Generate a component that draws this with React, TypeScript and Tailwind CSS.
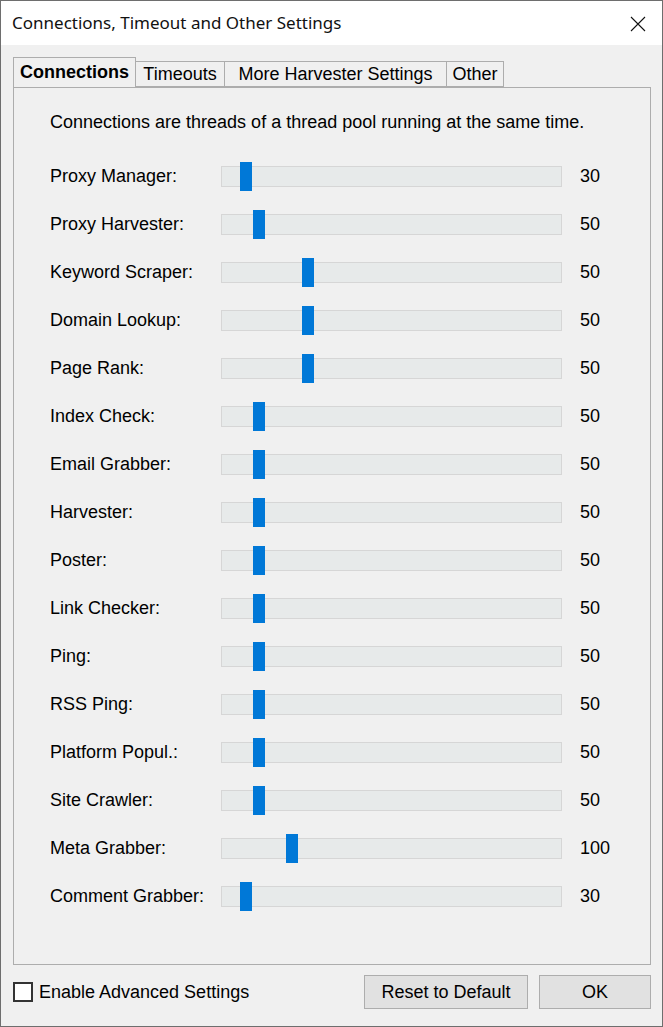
import { memo } from "react";

interface ISliderRow {
  label: string;
  value: number;
  thumb: number; // px offset of the thumb from the track's left edge
}

const rows: ISliderRow[] = [
  { label: "Proxy Manager:", value: 30, thumb: 18 },
  { label: "Proxy Harvester:", value: 50, thumb: 31 },
  { label: "Keyword Scraper:", value: 50, thumb: 80 },
  { label: "Domain Lookup:", value: 50, thumb: 80 },
  { label: "Page Rank:", value: 50, thumb: 80 },
  { label: "Index Check:", value: 50, thumb: 31 },
  { label: "Email Grabber:", value: 50, thumb: 31 },
  { label: "Harvester:", value: 50, thumb: 31 },
  { label: "Poster:", value: 50, thumb: 31 },
  { label: "Link Checker:", value: 50, thumb: 31 },
  { label: "Ping:", value: 50, thumb: 31 },
  { label: "RSS Ping:", value: 50, thumb: 31 },
  { label: "Platform Popul.:", value: 50, thumb: 31 },
  { label: "Site Crawler:", value: 50, thumb: 31 },
  { label: "Meta Grabber:", value: 100, thumb: 64 },
  { label: "Comment Grabber:", value: 30, thumb: 18 },
];

const SliderRow: React.FC<ISliderRow> = ({ label, value, thumb }) => {
  return (
    <div className="flex items-center h-[48px]">
      <span className="w-[171px] shrink-0">{label}</span>
      <div className="relative w-[341px] h-[21px] shrink-0 border border-[#d6d6d6] bg-[#e7eaea]">
        <div
          className="absolute top-[-5px] w-[12px] h-[29px] bg-[#0078d7]"
          style={{ left: thumb }}
        />
      </div>
      <span className="ml-[18px]">{value}</span>
    </div>
  );
};

const App = () => {
  return (
    <div
      className="w-[663px] h-[1027px] flex flex-col border border-[#6e6e6e] bg-[#f0f0f0] text-black text-[18px]"
      style={{ fontFamily: '"Liberation Sans", Arial, sans-serif' }}
    >
      {/* title bar */}
      <div className="h-[44px] shrink-0 bg-white flex items-center justify-between pl-[11px] pr-[16px]">
        <span
          className="text-[17px] text-[#111]"
          style={{ fontFamily: '"Noto Sans", sans-serif' }}
        >
          Connections, Timeout and Other Settings
        </span>
        <svg width="16" height="16" viewBox="0 0 16 16" className="mt-[1px]">
          <path d="M1 1 L15 15 M15 1 L1 15" stroke="#111" strokeWidth="1.1" />
        </svg>
      </div>

      <div className="flex flex-col pl-[12px] pr-[11px] pt-[13px]">
        {/* tab strip */}
        <div className="flex items-end h-[29px] relative z-10">
          <div className="w-[123px] h-[30px] pl-[6px] pt-[3px] border border-b-0 border-[#adadad] bg-[#f0f0f0] font-bold leading-[22px]">
            Connections
          </div>
          <div className="w-[90px] h-[26px] -ml-px border border-[#adadad] leading-[24px] text-center">
            Timeouts
          </div>
          <div className="w-[223px] h-[26px] -ml-px border border-[#adadad] leading-[24px] text-center">
            More Harvester Settings
          </div>
          <div className="w-[58px] h-[26px] -ml-px border border-[#adadad] leading-[24px] text-center">
            Other
          </div>
        </div>

        {/* panel */}
        <div className="h-[878px] border border-[#adadad] pl-[36px] pt-[24px]">
          <p className="h-[20px] leading-[20px]">
            Connections are threads of a thread pool running at the same time.
          </p>
          <div className="mt-[20px]">
            {rows.map((row) => (
              <SliderRow key={row.label} {...row} />
            ))}
          </div>
        </div>

        {/* footer */}
        <div className="flex items-center justify-between mt-[10px] h-[34px]">
          <label className="flex items-center gap-[6px]">
            <span className="w-[20px] h-[20px] border-2 border-[#333] bg-white" />
            <span>Enable Advanced Settings</span>
          </label>
          <div className="flex gap-[11px]">
            <button className="w-[164px] h-[34px] border border-[#adadad] bg-[#e1e1e1]">
              Reset to Default
            </button>
            <button className="w-[112px] h-[34px] border border-[#adadad] bg-[#e1e1e1]">
              OK
            </button>
          </div>
        </div>
      </div>
    </div>
  );
};

export default memo(App);
